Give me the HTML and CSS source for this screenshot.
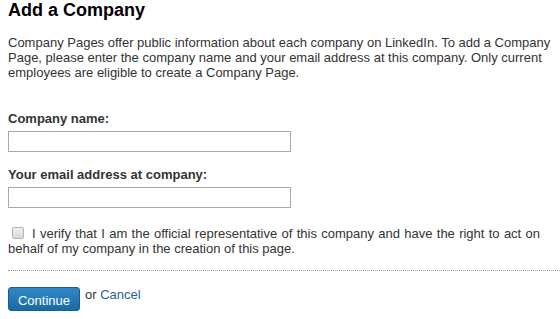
FILE: index.html
```html
<!DOCTYPE html>
<html>
<head>
<meta charset="utf-8">
<link rel="stylesheet" href="styles.css">
</head>
<body>
<div class="page">
  <h1 class="title">Add a Company</h1>
  <p class="intro">Company Pages offer public information about each company on LinkedIn. To add a Company Page, please enter the company name and your email address at this company. Only current employees are eligible to create a Company Page.</p>
  <form class="form">
    <div class="field">
      <label class="field-label" for="cname">Company name:</label>
      <input class="text-input" id="cname" type="text">
    </div>
    <div class="field field-second">
      <label class="field-label" for="cemail">Your email address at company:</label>
      <input class="text-input" id="cemail" type="text">
    </div>
    <div class="verify">
      <input class="check" id="verify" type="checkbox"><label for="verify">I verify that I am the official representative of this company and have the right to act on behalf of my company in the creation of this page.</label>
    </div>
    <div class="actions">
      <button class="btn-primary" type="button">Continue</button>
      <span class="alt">or <a class="cancel" href="#">Cancel</a></span>
    </div>
  </form>
</div>
</body>
</html>
```

FILE: styles.css
```css
html, body {
  margin: 0;
  padding: 0;
  background: #ffffff;
}
body {
  font-family: "Liberation Sans", Arial, sans-serif;
  color: #333333;
}
.page {
  padding: 0 0 0 8px;
}
.title {
  margin: 0;
  font-size: 18px;
  line-height: 20px;
  font-weight: bold;
  color: #000000;
}
.intro {
  margin: 15px 0 0 0;
  font-size: 13px;
  line-height: 15px;
  padding-right: 6px;
}
.form {
  margin: 31px 0 0 0;
}
.field {
  display: flex;
  flex-direction: column;
  align-items: flex-start;
}
.field-second {
  margin-top: 15px;
}
.field-label {
  font-size: 13px;
  line-height: 15px;
  font-weight: bold;
  color: #333333;
}
.text-input {
  margin: 5px 0 0 0;
  box-sizing: border-box;
  width: 283px;
  height: 21px;
  border: 1px solid #a9a9a9;
  padding: 0 3px;
  font: 13px "Liberation Sans", Arial, sans-serif;
  background: #fff;
}
.verify {
  margin-top: 18px;
  font-size: 13px;
  line-height: 15px;
  text-align: justify;
  padding-right: 20px;
  padding-bottom: 14px;
  border-bottom: 1px dotted #999999;
}
.check {
  -webkit-appearance: none;
  appearance: none;
  box-sizing: border-box;
  width: 12px;
  height: 12px;
  margin: 0 8px 0 4px;
  vertical-align: -1px;
  border: 1px solid #b5b5b5;
  border-radius: 2px;
  background: linear-gradient(#f0f0f0, #d8d8d8);
}
.actions {
  margin-top: 16px;
  display: flex;
  align-items: flex-start;
  gap: 5px;
}
.btn-primary {
  box-sizing: border-box;
  width: 72px;
  height: 24px;
  padding: 0;
  border: 1px solid #1a5d8f;
  border-radius: 3px;
  background: linear-gradient(#3089c8, #1a6aa4);
  color: #ffffff;
  font: 13px "Liberation Sans", Arial, sans-serif;
  line-height: 22px;
  padding-top: 2px;
}
.alt {
  font-size: 13px;
  line-height: 15px;
  margin-top: 0;
}
.cancel {
  color: #1f5f95;
  text-decoration: none;
}
```
